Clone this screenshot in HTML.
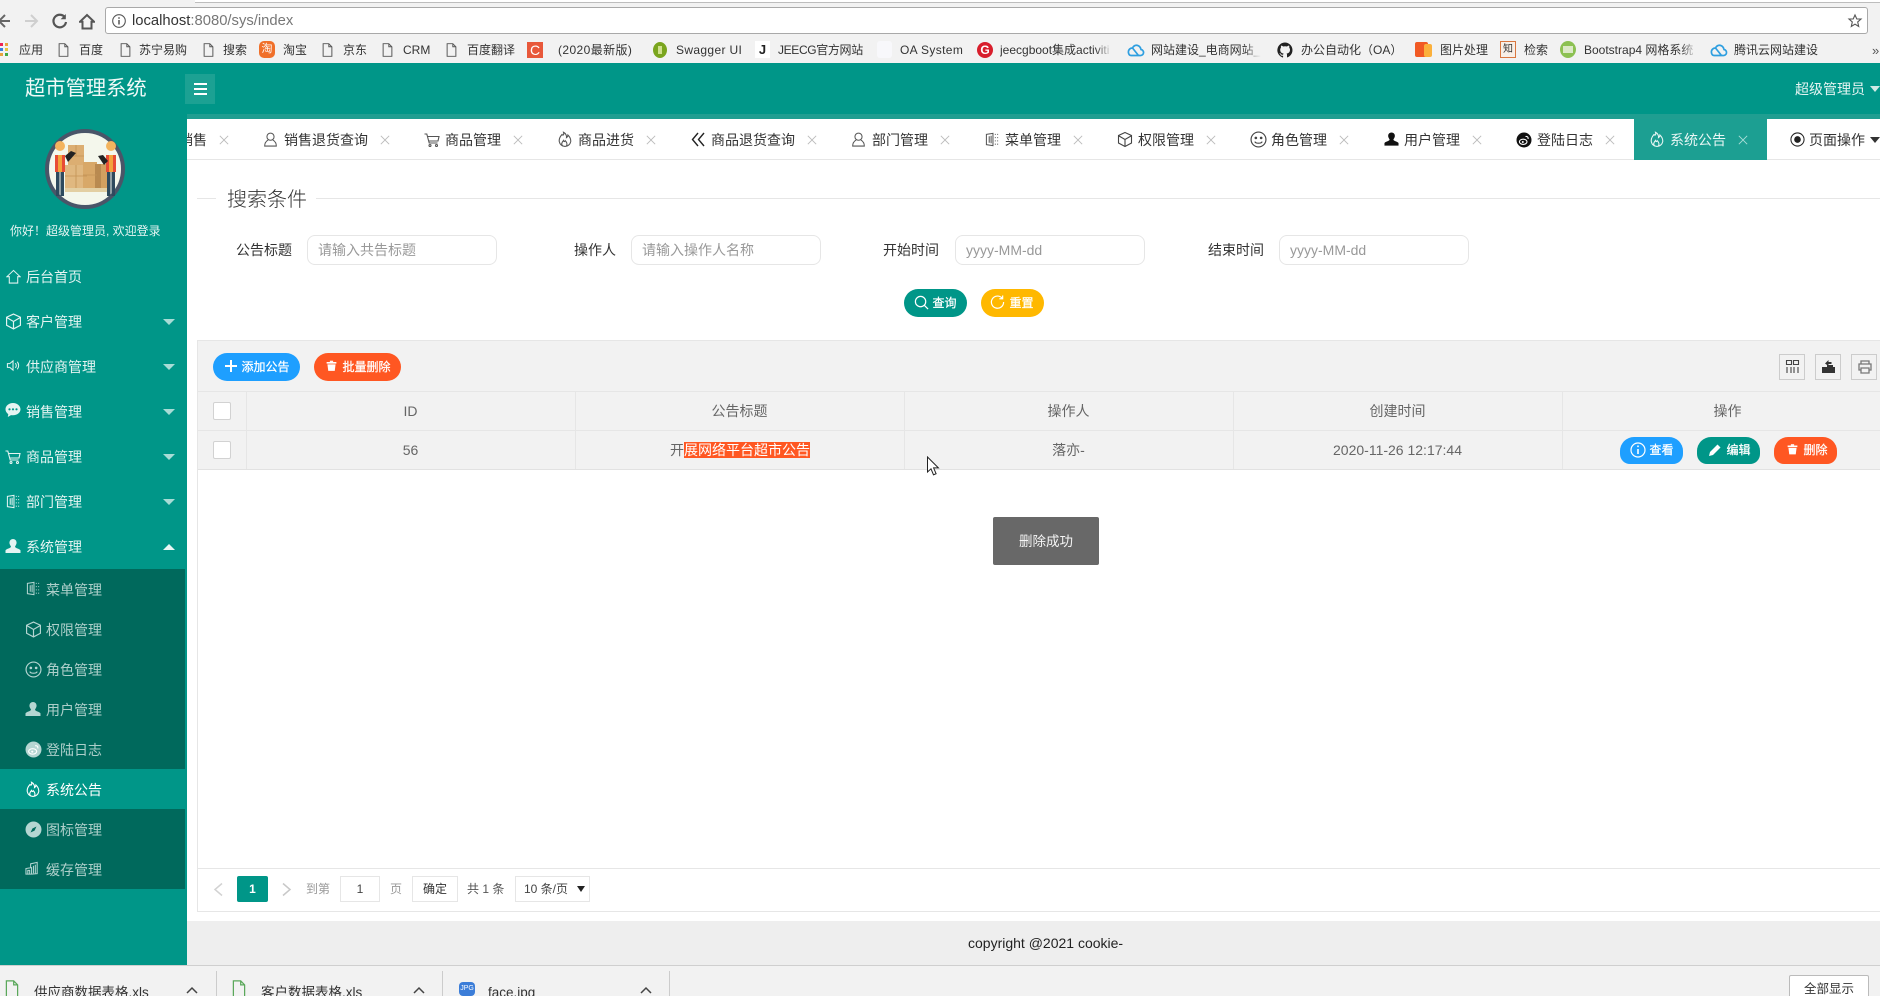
<!DOCTYPE html>
<html lang="zh-CN"><head><meta charset="utf-8"><title>超市管理系统</title>
<style>
*{box-sizing:border-box}
html,body{margin:0;padding:0;width:1880px;height:996px;overflow:hidden;background:#fff}
body{position:relative;font-family:"Liberation Sans","Noto Sans CJK SC",sans-serif;font-size:14px;color:#333}
.a{position:absolute;white-space:nowrap;line-height:20px}
.b{position:absolute}
.c{position:absolute;text-align:center;line-height:20px;white-space:nowrap}
svg.i{position:absolute;fill:none;stroke:currentColor;stroke-width:1.1;overflow:visible}
.bm{font-size:12px;color:#333;top:40px}
.tx{color:#bbb}
.tab{top:130px;color:#333}
.sd{color:#e4f4f2;left:26px}
.sub{color:rgba(255,255,255,.68);left:46px}
.lb{color:#333;top:240px}
.in{position:absolute;top:235px;width:190px;height:30px;border:1px solid #e6e6e6;border-radius:8px;background:#fff;color:#999;padding-left:10px;line-height:28px;font-size:14px}
.btn{position:absolute;height:28px;border-radius:14px;color:#fff;font-size:12px;line-height:28px;text-align:center;white-space:nowrap;-webkit-text-stroke:.25px #fff}
.th{color:#666;top:401px}
.td{color:#666;top:440px}
.line{position:absolute;background:#e6e6e6}
.box{position:absolute;background:#fff;border:1px solid #d2d2d2;border-radius:2px}
</style></head>
<body>
<svg width="0" height="0" style="position:absolute">
<defs>
<symbol id="x" viewBox="0 0 12 12"><path d="M1 1l10 10M11 1L1 11"/></symbol>
<symbol id="user" viewBox="0 0 16 16"><circle cx="8" cy="5" r="3.8"/><path d="M5.500 8.500C3 10 1.800 12 1.800 15h12.400c0-3-1.200-5-3.700-6.500"/></symbol>
<symbol id="cart" viewBox="0 0 16 16"><path d="M.5 2h2.300l2.400 9h8.300M3.500 4.500h11.500l-1 4.500H4.700"/><circle cx="6" cy="13.500" r="1"/><circle cx="12.500" cy="13.500" r="1"/></symbol>
<symbol id="fire" viewBox="0 0 16 16"><path d="M6.500.8c.8 2.500-.6 3.500-1.500 2.200C3.200 5 1.800 7.500 2.300 10.200a5.800 5.800 0 0 0 11.400 0c.3-2.600-1.200-5.200-2.800-6.700-.1 1.500-.7 2.200-1.400 2.600C9.800 4 8.500 1.800 6.500.8z"/><path d="M5.500 14.500c-1.500-2-.3-4.200 1-5.500.1 1.200 1.100 1.500 1.700.1 1.600 1.500 2.200 3.500 1.300 5.400"/></symbol>
<symbol id="dbl" viewBox="0 0 16 16"><path d="M8 1.500L2.500 8 8 14.500M14 1.500L8.500 8l5.500 6.500"/></symbol>
<symbol id="dept" viewBox="0 0 16 16"><path d="M1.500 2.500l7-1v13l-7-1zM4.500 4.500v7M6.500 4v8M10.500 2.500h1M13 2.500h1M10.500 6h1M13 6h1M10.500 9.500h1M13 9.500h1M10.500 13h1M13 13h1"/></symbol>
<symbol id="cube" viewBox="0 0 16 16"><path d="M8 1l6.500 3v7.500L8 15l-6.500-3.500V4zM2 4.500L8 8l6-3.500M8 8v7"/></symbol>
<symbol id="smile" viewBox="0 0 16 16"><circle cx="8" cy="8" r="7"/><circle cx="5.500" cy="6.500" r=".7" fill="currentColor"/><circle cx="10.500" cy="6.500" r=".7" fill="currentColor"/><path d="M4.500 10c1 2 6 2 7 0"/></symbol>
<symbol id="person" viewBox="0 0 16 16"><path fill="currentColor" stroke="none" d="M8 1a3.600 3.600 0 0 1 3.600 3.600c0 1.800-1.200 3-1.600 4-.1 1.500 5 2.200 5.500 3.800V15H.5v-2.600C1 10.800 6.100 10.100 6 8.600c-.4-1-1.600-2.200-1.600-4A3.600 3.600 0 0 1 8 1z"/></symbol>
<symbol id="weibo" viewBox="0 0 16 16"><circle cx="8" cy="8" r="7.500" fill="currentColor" stroke="none"/><ellipse cx="7.200" cy="9.800" rx="3.800" ry="2.600" fill="none" stroke="#fff"/><path d="M9.500 4.500c2-.5 3 1 2.500 2.500" stroke="#fff"/><circle cx="6.800" cy="10" r="1" fill="#fff" stroke="none"/></symbol>
<symbol id="dot" viewBox="0 0 16 16"><circle cx="8" cy="8" r="7"/><circle cx="8" cy="8" r="3" fill="currentColor"/></symbol>
<symbol id="home" viewBox="0 0 16 16"><path d="M1 8.200L8 1.500l7 6.700h-2.500V15h-9V8.200z"/></symbol>
<symbol id="speak" viewBox="0 0 16 16"><path d="M1.500 6v4h2.500l3.500 3V3L4 6zM10 5.500c1.200 1.500 1.200 3.500 0 5M12 4c2 2.300 2 5.700 0 8"/></symbol>
<symbol id="chat" viewBox="0 0 16 16"><path fill="currentColor" stroke="none" d="M8 1C3.800 1 .5 3.800.5 7.300c0 2 1.100 3.700 2.800 4.900L2.800 15l3.200-1.900c.7.100 1.300.2 2 .2 4.200 0 7.500-2.700 7.500-6S12.200 1 8 1z"/><circle cx="4.500" cy="7.300" r="1.100" fill="#009688" stroke="none"/><circle cx="8" cy="7.300" r="1.100" fill="#009688" stroke="none"/><circle cx="11.500" cy="7.300" r="1.100" fill="#009688" stroke="none"/></symbol>
<symbol id="compass" viewBox="0 0 16 16"><circle cx="8" cy="8" r="7.500" fill="currentColor" stroke="none"/><path d="M10.800 5.200L9 9 5.200 10.800 7 7z" fill="#00695c" stroke="none"/></symbol>
<symbol id="cache" viewBox="0 0 16 16"><path d="M1 14V8l6-1v7zM6 7V3l7-1.500v12L7 14M9 5v8M11 4v9M3 10h2v4H3z"/></symbol>
<symbol id="trash" viewBox="0 0 16 16"><path fill="currentColor" stroke="none" d="M2 3h12v2H2zM3 6h10l-1 8H4z"/><path fill="currentColor" stroke="none" d="M6 1.500h4V3H6z"/></symbol>
<symbol id="doc" viewBox="0 0 12 16"><path d="M1 .8h6.500L11 4.300v10.900H1zM7.500.8v3.500H11"/></symbol>
</defs>
</svg>

<!-- browser chrome -->
<div class="b" style="left:0;top:0;width:1880px;height:63px;background:#f2f2f2"></div>
<div class="b" style="left:195px;top:0;width:1685px;height:3px;background:#fff;border-bottom:1px solid #bdbdbd"></div>
<svg class="i" style="left:-3px;top:13px;width:14px;height:16px;color:#666;stroke-width:2" viewBox="0 0 14 16"><path d="M13 8H2M8 2L2 8l6 6"/></svg>
<svg class="i" style="left:24px;top:13px;width:15px;height:16px;color:#cfcfcf;stroke-width:2" viewBox="0 0 15 16"><path d="M1 8h12M7 2l6 6-6 6"/></svg>
<svg class="i" style="left:52px;top:13px;width:15px;height:16px;color:#555;stroke-width:2.200" viewBox="0 0 15 16"><path d="M13 4.500A6.300 6.300 0 1 0 14 9"/><path d="M13.800 1v5.200H8.600z" fill="#555" stroke="none"/></svg>
<svg class="i" style="left:79px;top:13px;width:16px;height:17px;color:#555;stroke-width:2" viewBox="0 0 16 16"><use href="#home"/></svg>
<div class="b" style="left:105px;top:7px;width:1763px;height:27px;background:#fff;border:1px solid #a9a9a9;border-radius:3px"></div>
<svg class="i" style="left:112px;top:14px;width:14px;height:14px;color:#555" viewBox="0 0 14 14"><circle cx="7" cy="7" r="6.300"/><path d="M7 6v4.500M7 3.300v1.400" stroke-width="1.500"/></svg>
<span class="a" style="left:132px;top:11px;font-size:14.800px;color:#333">localhost<span style="color:#777">:8080/sys/index</span></span>
<svg class="i" style="left:1848px;top:14px;width:14px;height:14px;color:#555" viewBox="0 0 14 14"><path d="M7 1l1.800 4h4.200l-3.300 3 1 4.500L7 10.200l-3.700 2.300 1-4.500L1 5h4.200z"/></svg>

<!-- bookmarks -->
<div class="b" style="left:0;top:43px;width:3px;height:3px;background:#e25"></div><div class="b" style="left:5px;top:43px;width:3px;height:3px;background:#e8a33d"></div><div class="b" style="left:0;top:48px;width:3px;height:3px;background:#3a7ee0"></div><div class="b" style="left:5px;top:48px;width:3px;height:3px;background:#e8c33d"></div><div class="b" style="left:0;top:53px;width:3px;height:3px;background:#e8a33d"></div><div class="b" style="left:5px;top:53px;width:3px;height:3px;background:#4a4"></div>
<span class="a bm" style="left:19px">应用</span>
<svg class="i" style="left:58px;top:43px;width:11px;height:14px;color:#555" viewBox="0 0 12 16"><use href="#doc"/></svg><span class="a bm" style="left:79px">百度</span>
<svg class="i" style="left:120px;top:43px;width:11px;height:14px;color:#555" viewBox="0 0 12 16"><use href="#doc"/></svg><span class="a bm" style="left:139px">苏宁易购</span>
<svg class="i" style="left:203px;top:43px;width:11px;height:14px;color:#555" viewBox="0 0 12 16"><use href="#doc"/></svg><span class="a bm" style="left:223px">搜索</span>
<div class="c" style="left:259px;top:41px;width:16px;height:17px;background:#f0702a;border-radius:5px;color:#fff;font-size:11px;line-height:17px">淘</div><span class="a bm" style="left:283px">淘宝</span>
<svg class="i" style="left:322px;top:43px;width:11px;height:14px;color:#555" viewBox="0 0 12 16"><use href="#doc"/></svg><span class="a bm" style="left:343px">京东</span>
<svg class="i" style="left:382px;top:43px;width:11px;height:14px;color:#555" viewBox="0 0 12 16"><use href="#doc"/></svg><span class="a bm" style="left:403px">CRM</span>
<svg class="i" style="left:446px;top:43px;width:11px;height:14px;color:#555" viewBox="0 0 12 16"><use href="#doc"/></svg><span class="a bm" style="left:467px">百度翻译</span>
<div class="c" style="left:527px;top:42px;width:16px;height:16px;background:#e8583a;color:#fff;font-size:14px;line-height:16px">C</div><span class="a bm" style="left:558px;letter-spacing:.4px">(2020最新版)</span>
<div class="b" style="left:653px;top:42px;width:14px;height:16px;background:#7aa51e;border-radius:50%"></div><div class="b" style="left:658px;top:46px;width:4px;height:8px;background:#cfe08d"></div><span class="a bm" style="left:676px;letter-spacing:.35px">Swagger UI</span>
<div class="c" style="left:755px;top:41px;width:15px;height:17px;background:#fff;color:#222;font-weight:bold;font-size:13px;line-height:17px">J</div><span class="a bm" style="left:778px;letter-spacing:-.35px">JEECG官方网站</span>
<div class="b" style="left:877px;top:41px;width:15px;height:17px;background:#f8f8fb;border-radius:3px"></div><span class="a bm" style="left:900px;letter-spacing:.35px">OA System</span>
<div class="c" style="left:977px;top:42px;width:16px;height:16px;background:#d81e2c;border-radius:50%;color:#fff;font-weight:bold;font-size:12px;line-height:16px">G</div><span class="a bm" style="left:1000px;width:112px;overflow:hidden;-webkit-mask-image:linear-gradient(90deg,#000 85%,transparent)">jeecgboot集成activiti</span>
<svg class="i" style="left:1127px;top:43px;width:17px;height:14px;color:#2f9fe0;stroke-width:1.700" viewBox="0 0 17 14"><path d="M4 12.500h9a3 3 0 0 0 1-6C13 2 8 .5 5.500 5 2.500 5 1 7.500 1.500 10c.4 1.500 1.300 2.500 2.500 2.500zM5.500 5l6 7.500"/></svg><span class="a bm" style="left:1151px;width:110px;overflow:hidden;-webkit-mask-image:linear-gradient(90deg,#000 85%,transparent)">网站建设_电商网站_后台</span>
<svg class="i" style="left:1277px;top:42px;width:16px;height:16px" viewBox="0 0 16 16"><path fill="#222" stroke="none" d="M8 .5a7.700 7.700 0 0 0-2.400 15c.4.100.5-.2.500-.4v-1.400c-2.100.5-2.600-1-2.600-1-.3-.9-.8-1.100-.8-1.100-.7-.5 0-.5 0-.5.800.1 1.200.8 1.200.8.700 1.200 1.800.9 2.300.7 0-.5.300-.9.500-1.100-1.700-.2-3.500-.9-3.500-3.800 0-.8.300-1.500.8-2-.1-.2-.3-1 .1-2 0 0 .6-.2 2.100.8a7.300 7.300 0 0 1 3.800 0c1.500-1 2.100-.8 2.100-.8.400 1 .2 1.800.1 2 .5.500.8 1.200.8 2 0 2.900-1.800 3.600-3.500 3.800.3.200.5.700.5 1.400v2.100c0 .2.100.5.500.4A7.700 7.700 0 0 0 8 .5z"/></svg><span class="a bm" style="left:1301px">办公自动化（OA）</span>
<div class="b" style="left:1415px;top:42px;width:13px;height:15px;background:#f15a24;border-radius:2px"></div><div class="b" style="left:1424px;top:44px;width:8px;height:13px;background:#fbb03b;border-radius:2px"></div><span class="a bm" style="left:1440px">图片处理</span>
<div class="c" style="left:1500px;top:41px;width:16px;height:17px;background:#f8efe7;border:1px solid #d9773f;color:#333;font-size:10px;line-height:15px">知</div><span class="a bm" style="left:1524px">检索</span>
<div class="b" style="left:1560px;top:41px;width:16px;height:17px;background:#8cc152;border-radius:50%"></div><div class="b" style="left:1563px;top:46px;width:10px;height:7px;background:#dce9c7"></div><span class="a bm" style="left:1584px;width:113px;overflow:hidden;-webkit-mask-image:linear-gradient(90deg,#000 85%,transparent)">Bootstrap4 网格系统</span>
<svg class="i" style="left:1710px;top:43px;width:17px;height:14px;color:#2f9fe0;stroke-width:1.700" viewBox="0 0 17 14"><path d="M4 12.500h9a3 3 0 0 0 1-6C13 2 8 .5 5.500 5 2.500 5 1 7.500 1.500 10c.4 1.500 1.300 2.500 2.500 2.500zM5.500 5l6 7.500"/></svg><span class="a bm" style="left:1734px">腾讯云网站建设</span>
<span class="a" style="left:1872px;top:41px;font-size:13px;color:#555">»</span>

<!-- header and sidebar -->
<div class="b" style="left:0;top:63px;width:1880px;height:51px;background:#009688"></div>
<div class="b" style="left:0;top:114px;width:1880px;height:5px;background:#1f9e91"></div>
<div class="b" style="left:0;top:63px;width:187px;height:903px;background:#009688"></div>
<div class="b" style="left:185px;top:74px;width:30px;height:30px;background:#1ca193"></div>
<div class="b" style="left:194px;top:83px;width:13px;height:2px;background:#fff"></div><div class="b" style="left:194px;top:88px;width:13px;height:2px;background:#fff"></div><div class="b" style="left:194px;top:93px;width:13px;height:2px;background:#fff"></div>
<span class="a" style="left:25px;top:74px;font-size:20.300px;line-height:30px;color:#f0faf8">超市管理系统</span>
<span class="a" style="left:1795px;top:79px;font-size:14px;color:#e4f4f2">超级管理员</span>
<div class="b" style="left:1870px;top:86px;border:5px solid transparent;border-top:6px solid #cfeae6;border-bottom:0"></div>

<!-- avatar -->
<svg class="b" style="left:45px;top:129px" width="80" height="80" viewBox="0 0 80 80">
<circle cx="40" cy="40" r="38" fill="#f4f7ec" stroke="#4a5568" stroke-width="4"/>
<rect x="23" y="16" width="16" height="22" fill="#dcae72"/><path d="M23 27h16M31 16v11" stroke="#c49355" stroke-width=".8"/>
<rect x="20" y="36" width="22" height="23" fill="#e0b880"/><rect x="38" y="33" width="14" height="26" fill="#d8a868"/><rect x="50" y="35" width="6" height="24" fill="#b98a50"/><rect x="56" y="35" width="6" height="24" fill="#d2a060"/>
<path d="M20 47h22M31 36v23M38 46h14" stroke="#c49355" stroke-width=".8"/>
<rect x="20" y="59" width="43" height="4" fill="#e3cfa3"/>
<circle cx="15" cy="17" r="5" fill="#f3b45f"/><rect x="10" y="26" width="10" height="17" fill="#e84c35"/><rect x="13" y="26" width="4" height="17" fill="#f2a33b"/><rect x="11" y="43" width="3.500" height="24" fill="#2e4a5e"/><rect x="15.500" y="43" width="3.500" height="24" fill="#2e4a5e"/><path d="M20 27l6-5 5 2-8 9z" fill="#222"/>
<circle cx="66" cy="17" r="5" fill="#f3b45f"/><rect x="61" y="26" width="10" height="17" fill="#e84c35"/><rect x="64" y="26" width="4" height="17" fill="#f2a33b"/><rect x="62" y="43" width="3.500" height="24" fill="#2e4a5e"/><rect x="66.500" y="43" width="3.500" height="24" fill="#2e4a5e"/><path d="M53 27l5-1 5 6-4 4z" fill="#222"/>
</svg>
<span class="a" style="left:10px;top:221px;font-size:12px;color:#e4f4f2">你好！超级管理员, 欢迎登录</span>

<svg class="i" style="left:6px;top:269px;width:15px;height:15px;color:#e4f4f2" viewBox="0 0 16 16"><use href="#home"/></svg><span class="a sd" style="top:267px">后台首页</span>
<svg class="i" style="left:5px;top:313px;width:17px;height:17px;color:#e4f4f2" viewBox="0 0 16 16"><use href="#cube"/></svg><span class="a sd" style="top:312px">客户管理</span>
<svg class="i" style="left:6px;top:358px;width:15px;height:15px;color:#e4f4f2" viewBox="0 0 16 16"><use href="#speak"/></svg><span class="a sd" style="top:357px">供应商管理</span>
<svg class="i" style="left:5px;top:402px;width:16px;height:16px;color:#e4f4f2" viewBox="0 0 16 16"><use href="#chat"/></svg><span class="a sd" style="top:402px">销售管理</span>
<svg class="i" style="left:5px;top:449px;width:16px;height:16px;color:#e4f4f2" viewBox="0 0 16 16"><use href="#cart"/></svg><span class="a sd" style="top:447px">商品管理</span>
<svg class="i" style="left:6px;top:494px;width:15px;height:15px;color:#e4f4f2" viewBox="0 0 16 16"><use href="#dept"/></svg><span class="a sd" style="top:492px">部门管理</span>
<svg class="i" style="left:5px;top:538px;width:16px;height:16px;color:#e4f4f2" viewBox="0 0 16 16"><use href="#person"/></svg><span class="a sd" style="top:537px">系统管理</span>
<div class="b" style="left:163px;top:319px;border:6px solid transparent;border-top:6px solid #a8dcd6;border-bottom:0"></div>
<div class="b" style="left:163px;top:364px;border:6px solid transparent;border-top:6px solid #a8dcd6;border-bottom:0"></div>
<div class="b" style="left:163px;top:409px;border:6px solid transparent;border-top:6px solid #a8dcd6;border-bottom:0"></div>
<div class="b" style="left:163px;top:454px;border:6px solid transparent;border-top:6px solid #a8dcd6;border-bottom:0"></div>
<div class="b" style="left:163px;top:499px;border:6px solid transparent;border-top:6px solid #a8dcd6;border-bottom:0"></div>
<div class="b" style="left:163px;top:544px;border:6px solid transparent;border-bottom:6px solid #e9f6f4;border-top:0"></div>

<div class="b" style="left:0;top:569px;width:185px;height:320px;background:#00695c"></div>
<div class="b" style="left:0;top:769px;width:185px;height:40px;background:#009688"></div>
<svg class="i" style="left:26px;top:581px;width:15px;height:15px;color:#b5d6d2" viewBox="0 0 16 16"><use href="#dept"/></svg><span class="a sub" style="top:580px">菜单管理</span>
<svg class="i" style="left:25px;top:621px;width:17px;height:17px;color:#b5d6d2" viewBox="0 0 16 16"><use href="#cube"/></svg><span class="a sub" style="top:620px">权限管理</span>
<svg class="i" style="left:25px;top:661px;width:17px;height:17px;color:#b5d6d2" viewBox="0 0 16 16"><use href="#smile"/></svg><span class="a sub" style="top:660px">角色管理</span>
<svg class="i" style="left:25px;top:701px;width:16px;height:16px;color:#b5d6d2" viewBox="0 0 16 16"><use href="#person"/></svg><span class="a sub" style="top:700px">用户管理</span>
<svg class="i" style="left:25px;top:741px;width:17px;height:17px;color:#b5d6d2" viewBox="0 0 16 16"><use href="#weibo"/></svg><span class="a sub" style="top:740px">登陆日志</span>
<svg class="i" style="left:25px;top:781px;width:16px;height:17px;color:#fff" viewBox="0 0 16 16"><use href="#fire"/></svg><span class="a sub" style="top:780px;color:#fff">系统公告</span>
<svg class="i" style="left:25px;top:821px;width:17px;height:17px;color:#b5d6d2" viewBox="0 0 16 16"><use href="#compass"/></svg><span class="a sub" style="top:820px">图标管理</span>
<svg class="i" style="left:25px;top:861px;width:15px;height:15px;color:#b5d6d2" viewBox="0 0 16 16"><use href="#cache"/></svg><span class="a sub" style="top:860px">缓存管理</span>

<!-- tabs -->
<div class="b" style="left:187px;top:119px;width:1693px;height:41px;background:#fff;border-bottom:1px solid #e6e6e6"></div>
<div class="a tab" style="left:187px;width:20px;overflow:hidden;direction:rtl">销售</div>
<svg class="i tx" style="left:219px;top:135px;width:10px;height:10px" viewBox="0 0 12 12"><use href="#x"/></svg>
<svg class="i" style="left:263px;top:131px;width:15px;height:17px;color:#555" viewBox="0 0 16 16"><use href="#user"/></svg><span class="a tab" style="left:284px">销售退货查询</span><svg class="i tx" style="left:380px;top:135px;width:10px;height:10px" viewBox="0 0 12 12"><use href="#x"/></svg>
<svg class="i" style="left:424px;top:132px;width:16px;height:16px;color:#555" viewBox="0 0 16 16"><use href="#cart"/></svg><span class="a tab" style="left:445px">商品管理</span><svg class="i tx" style="left:513px;top:135px;width:10px;height:10px" viewBox="0 0 12 12"><use href="#x"/></svg>
<svg class="i" style="left:557px;top:131px;width:16px;height:17px;color:#555" viewBox="0 0 16 16"><use href="#fire"/></svg><span class="a tab" style="left:578px">商品进货</span><svg class="i tx" style="left:646px;top:135px;width:10px;height:10px" viewBox="0 0 12 12"><use href="#x"/></svg>
<svg class="i" style="left:690px;top:131px;width:16px;height:17px;color:#222;stroke-width:1.400" viewBox="0 0 16 16"><use href="#dbl"/></svg><span class="a tab" style="left:711px">商品退货查询</span><svg class="i tx" style="left:807px;top:135px;width:10px;height:10px" viewBox="0 0 12 12"><use href="#x"/></svg>
<svg class="i" style="left:851px;top:131px;width:15px;height:17px;color:#555" viewBox="0 0 16 16"><use href="#user"/></svg><span class="a tab" style="left:872px">部门管理</span><svg class="i tx" style="left:940px;top:135px;width:10px;height:10px" viewBox="0 0 12 12"><use href="#x"/></svg>
<svg class="i" style="left:985px;top:132px;width:15px;height:15px;color:#555" viewBox="0 0 16 16"><use href="#dept"/></svg><span class="a tab" style="left:1005px">菜单管理</span><svg class="i tx" style="left:1073px;top:135px;width:10px;height:10px" viewBox="0 0 12 12"><use href="#x"/></svg>
<svg class="i" style="left:1117px;top:131px;width:16px;height:17px;color:#444" viewBox="0 0 16 16"><use href="#cube"/></svg><span class="a tab" style="left:1138px">权限管理</span><svg class="i tx" style="left:1206px;top:135px;width:10px;height:10px" viewBox="0 0 12 12"><use href="#x"/></svg>
<svg class="i" style="left:1250px;top:131px;width:17px;height:17px;color:#444" viewBox="0 0 16 16"><use href="#smile"/></svg><span class="a tab" style="left:1271px">角色管理</span><svg class="i tx" style="left:1339px;top:135px;width:10px;height:10px" viewBox="0 0 12 12"><use href="#x"/></svg>
<svg class="i" style="left:1384px;top:131px;width:15px;height:16px;color:#111" viewBox="0 0 16 16"><use href="#person"/></svg><span class="a tab" style="left:1404px">用户管理</span><svg class="i tx" style="left:1472px;top:135px;width:10px;height:10px" viewBox="0 0 12 12"><use href="#x"/></svg>
<svg class="i" style="left:1516px;top:132px;width:16px;height:16px;color:#111" viewBox="0 0 16 16"><use href="#weibo"/></svg><span class="a tab" style="left:1537px">登陆日志</span><svg class="i tx" style="left:1605px;top:135px;width:10px;height:10px" viewBox="0 0 12 12"><use href="#x"/></svg>
<div class="b" style="left:1634px;top:119px;width:133px;height:41px;background:#1c9f92"></div>
<svg class="i" style="left:1649px;top:131px;width:16px;height:17px;color:#e8f6f4" viewBox="0 0 16 16"><use href="#fire"/></svg><span class="a" style="left:1670px;top:130px;color:#e8f6f4">系统公告</span><svg class="i" style="left:1738px;top:135px;width:10px;height:10px;color:#a9ddd7" viewBox="0 0 12 12"><use href="#x"/></svg>
<svg class="i" style="left:1790px;top:132px;width:15px;height:15px;color:#222" viewBox="0 0 16 16"><use href="#dot"/></svg><span class="a tab" style="left:1809px">页面操作</span>
<div class="b" style="left:1870px;top:137px;border:5px solid transparent;border-top:6px solid #333;border-bottom:0"></div>

<!-- search -->
<div class="line" style="left:197px;top:198px;width:19px;height:1px"></div>
<div class="line" style="left:316px;top:198px;width:1564px;height:1px"></div>
<span class="a" style="left:227px;top:185px;font-size:20px;line-height:30px;color:#333;font-weight:300">搜索条件</span>
<span class="a lb" style="left:236px">公告标题</span><div class="in" style="left:307px">请输入共告标题</div>
<span class="a lb" style="left:574px">操作人</span><div class="in" style="left:631px">请输入操作人名称</div>
<span class="a lb" style="left:883px">开始时间</span><div class="in" style="left:955px">yyyy-MM-dd</div>
<span class="a lb" style="left:1208px">结束时间</span><div class="in" style="left:1279px">yyyy-MM-dd</div>
<div class="btn" style="left:904px;top:289px;width:63px;background:#009688;padding-left:18px">查询</div>
<svg class="i" style="left:914px;top:295px;width:15px;height:15px;color:#fff;stroke-width:1.300" viewBox="0 0 16 16"><circle cx="7" cy="7" r="5.500"/><path d="M11 11l4 4"/></svg>
<div class="btn" style="left:981px;top:289px;width:63px;background:#ffb800;padding-left:18px">重置</div>
<svg class="i" style="left:990px;top:294px;width:15px;height:16px;color:#fff;stroke-width:1.300" viewBox="0 0 16 16"><path d="M13 4A6.500 6.500 0 1 0 14.500 8M13.500 1v3.500H10"/></svg>

<!-- table -->
<div class="b" style="left:197px;top:340px;width:1683px;height:130px;background:#f2f2f2;border-top:1px solid #e6e6e6;border-left:1px solid #e6e6e6;border-bottom:1px solid #e2e2e2"></div>
<div class="line" style="left:197px;top:391px;width:1683px;height:1px"></div>
<div class="line" style="left:197px;top:430px;width:1683px;height:1px"></div>
<div class="line" style="left:246px;top:391px;width:1px;height:78px"></div>
<div class="line" style="left:575px;top:391px;width:1px;height:78px"></div>
<div class="line" style="left:904px;top:391px;width:1px;height:78px"></div>
<div class="line" style="left:1233px;top:391px;width:1px;height:78px"></div>
<div class="line" style="left:1562px;top:391px;width:1px;height:78px"></div>

<div class="btn" style="left:213px;top:353px;width:87px;background:#1e9fff;padding-left:18px">添加公告</div>
<svg class="i" style="left:225px;top:360px;width:12px;height:12px;color:#fff;stroke-width:2" viewBox="0 0 12 12"><path d="M6 0v12M0 6h12"/></svg>
<div class="btn" style="left:314px;top:353px;width:87px;background:#ff5722;padding-left:18px">批量删除</div>
<svg class="i" style="left:325px;top:359px;width:13px;height:14px;color:#fff" viewBox="0 0 16 16"><use href="#trash"/></svg>

<div class="b" style="left:1779px;top:354px;width:26px;height:26px;border:1px solid #ccc"></div>
<svg class="i" style="left:1786px;top:360px;width:13px;height:13px;color:#444" viewBox="0 0 13 13"><path d="M.5.500h5v4h-5zM7.500.500h5v4h-5zM1 7v6M5 7v6M8 7v6M12 7v6"/></svg>
<div class="b" style="left:1815px;top:354px;width:26px;height:26px;border:1px solid #ccc"></div>
<svg class="i" style="left:1822px;top:360px;width:13px;height:13px" viewBox="0 0 13 13"><path fill="#333" stroke="none" d="M0 7h13v6H0zM5 5h6v2H5zM3 3.500L6.500 0v2h3v2h-3v2z"/></svg>
<div class="b" style="left:1851px;top:354px;width:26px;height:26px;border:1px solid #ccc"></div>
<svg class="i" style="left:1858px;top:360px;width:14px;height:14px;color:#777;stroke-width:1.300" viewBox="0 0 14 14"><path d="M3 4V1h8v3M3 10H1V4h12v6h-2M3 8h8v5H3z"/></svg>

<div class="box" style="left:213px;top:402px;width:18px;height:18px"></div>
<div class="box" style="left:213px;top:441px;width:18px;height:18px"></div>
<div class="c th" style="left:246px;width:329px">ID</div>
<div class="c th" style="left:575px;width:329px">公告标题</div>
<div class="c th" style="left:904px;width:329px">操作人</div>
<div class="c th" style="left:1233px;width:329px">创建时间</div>
<div class="c th" style="left:1562px;width:331px">操作</div>
<div class="c td" style="left:246px;width:329px">56</div>
<span class="a td" style="left:670px">开</span>
<div class="b" style="left:684px;top:442px;width:126px;height:16px;background:#ff5722"></div>
<span class="a" style="left:684px;top:440px;color:#fff">展网络平台超市公告</span>
<div class="c td" style="left:904px;width:329px">落亦-</div>
<div class="c td" style="left:1233px;width:329px">2020-11-26 12:17:44</div>
<div class="btn" style="left:1620px;top:437px;width:63px;height:27px;border-radius:14px 14px 10px 10px;background:#1e9fff;padding-left:20px;line-height:27px">查看</div>
<svg class="i" style="left:1630px;top:442px;width:16px;height:16px;color:#fff;stroke-width:1.200" viewBox="0 0 16 16"><circle cx="8" cy="8" r="7"/><path d="M8 7v5M8 3.500v1.600" stroke-width="1.600"/></svg>
<div class="btn" style="left:1697px;top:437px;width:63px;height:27px;border-radius:14px 14px 10px 10px;background:#009688;padding-left:20px;line-height:27px">编辑</div>
<svg class="i" style="left:1709px;top:444px;width:12px;height:12px" viewBox="0 0 12 12"><path fill="#fff" stroke="none" d="M0 12l1-4L8.500.500l3 3L4 11z"/></svg>
<div class="btn" style="left:1774px;top:437px;width:63px;height:27px;border-radius:14px 14px 10px 10px;background:#ff5722;padding-left:20px;line-height:27px">删除</div>
<svg class="i" style="left:1786px;top:443px;width:13px;height:13px;color:#fff" viewBox="0 0 16 16"><use href="#trash"/></svg>

<!-- toast -->
<div class="b" style="left:993px;top:517px;width:106px;height:48px;background:#686868;border-radius:2px;color:#f4f4f4;text-align:center;line-height:50px;font-size:13.500px">删除成功</div>

<!-- cursor -->
<svg class="b" style="left:926px;top:456px" width="14" height="21" viewBox="0 0 14 21"><path d="M1.500 1v15l3.500-3.200 2.500 6 2.600-1.100-2.500-5.800h4.800z" fill="#fff" stroke="#222" stroke-width="1"/></svg>

<!-- pagination -->
<div class="line" style="left:197px;top:340px;width:1px;height:572px"></div>
<div class="line" style="left:197px;top:868px;width:1683px;height:1px"></div>
<div class="line" style="left:197px;top:911px;width:1683px;height:1px"></div>
<svg class="i" style="left:214px;top:883px;width:9px;height:13px;color:#d2d2d2;stroke-width:1.500" viewBox="0 0 9 13"><path d="M8 .5L1 6.500l7 6"/></svg>
<div class="c" style="left:237px;top:876px;width:31px;height:26px;background:#009688;color:#fff;border-radius:2px;line-height:26px;font-size:12px;font-weight:bold">1</div>
<svg class="i" style="left:282px;top:883px;width:9px;height:13px;color:#c8c8c8;stroke-width:1.500" viewBox="0 0 9 13"><path d="M1 .5l7 6-7 6"/></svg>
<span class="a" style="left:306px;top:879px;font-size:12px;color:#999">到第</span>
<div class="c" style="left:340px;top:876px;width:40px;height:26px;border:1px solid #e6e6e6;line-height:24px;font-size:12px;color:#444;background:#fff">1</div>
<span class="a" style="left:390px;top:879px;font-size:12px;color:#999">页</span>
<div class="c" style="left:412px;top:876px;width:46px;height:26px;border:1px solid #e6e6e6;line-height:24px;font-size:12px;color:#333;background:#fff">确定</div>
<span class="a" style="left:467px;top:879px;font-size:12px;color:#555">共 1 条</span>
<div class="b" style="left:515px;top:876px;width:75px;height:26px;border:1px solid #e6e6e6;background:#fff;line-height:24px;font-size:12px;color:#444;padding-left:8px;white-space:nowrap">10 条/页</div>
<div class="b" style="left:577px;top:886px;border:4px solid transparent;border-top:6px solid #222;border-bottom:0"></div>

<!-- footer -->
<div class="b" style="left:187px;top:921px;width:1693px;height:45px;background:#eee"></div>
<span class="a" style="left:968px;top:933px;font-size:14px;color:#222">copyright @2021 cookie-</span>

<!-- downloads -->
<div class="b" style="left:0;top:965px;width:1880px;height:31px;background:#f2f2f2;border-top:1px solid #cfcfcf;overflow:hidden">
<svg class="i" style="left:5px;top:14px;width:14px;height:18px;color:#5ba85b" viewBox="0 0 12 16"><use href="#doc"/></svg>
<span class="a" style="left:34px;top:17px;font-size:13.500px">供应商数据表格.xls</span>
<svg class="i" style="left:186px;top:21px;width:12px;height:7px;color:#444;stroke-width:1.500" viewBox="0 0 12 7"><path d="M1 6l5-5 5 5"/></svg>
<div class="b" style="left:216px;top:5px;width:1px;height:26px;background:#ccc"></div>
<svg class="i" style="left:232px;top:14px;width:14px;height:18px;color:#5ba85b" viewBox="0 0 12 16"><use href="#doc"/></svg>
<span class="a" style="left:261px;top:17px;font-size:13.500px">客户数据表格.xls</span>
<svg class="i" style="left:413px;top:21px;width:12px;height:7px;color:#444;stroke-width:1.500" viewBox="0 0 12 7"><path d="M1 6l5-5 5 5"/></svg>
<div class="b" style="left:442px;top:5px;width:1px;height:26px;background:#ccc"></div>
<div class="c" style="left:459px;top:16px;width:16px;height:14px;background:#3b7dd8;border-radius:4px;color:#fff;font-size:7px;line-height:14px">JPG</div>
<span class="a" style="left:488px;top:17px;font-size:13.500px">face.jpg</span>
<svg class="i" style="left:640px;top:21px;width:12px;height:7px;color:#444;stroke-width:1.500" viewBox="0 0 12 7"><path d="M1 6l5-5 5 5"/></svg>
<div class="b" style="left:669px;top:5px;width:1px;height:26px;background:#ccc"></div>
<div class="c" style="left:1789px;top:9px;width:80px;height:30px;background:#fff;border:1px solid #bbb;border-radius:2px;line-height:26px;font-size:12.500px">全部显示</div>
</div>
</body></html>
